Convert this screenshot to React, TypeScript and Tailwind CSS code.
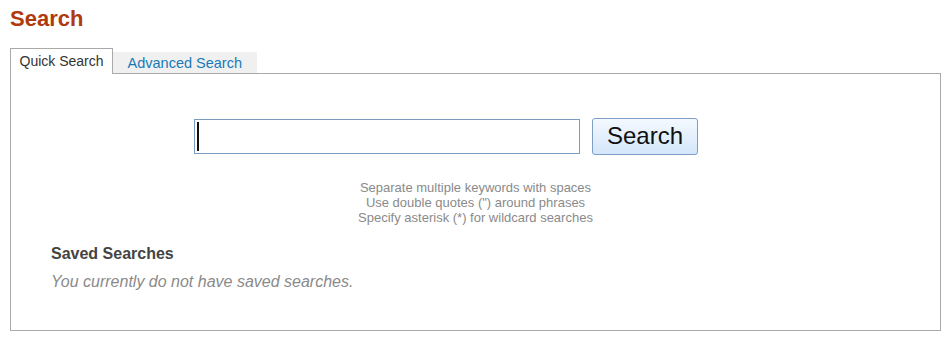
import React, { useState } from 'react';

const font = { fontFamily: '"Liberation Sans", Arial, sans-serif' };

export default function App() {
  const [tab, setTab] = useState<'quick' | 'advanced'>('quick');
  const [query, setQuery] = useState('');

  return (
    <div className="bg-white min-h-[338px] pl-[10px] pr-[6px] pt-[6px]" style={font}>
      <h1 className="text-[22px] leading-[25px] font-bold text-[#b03a0e]">Search</h1>

      <div className="mt-[17px] flex items-end h-[25px]">
        <button
          onClick={() => setTab('quick')}
          className={
            tab === 'quick'
              ? 'relative z-10 h-[26px] -mb-px px-[8.5px] pb-[1px] border border-b-0 border-[#aaaaaa] bg-white text-[14px] text-[#333]'
              : 'h-[21px] px-[15px] bg-[#f0f0f0] text-[14px] text-[#1a7ab8]'
          }
        >
          Quick Search
        </button>
        <button
          onClick={() => setTab('advanced')}
          className={
            tab === 'advanced'
              ? 'relative z-10 h-[26px] -mb-px px-[8.5px] pb-[1px] border border-b-0 border-[#aaaaaa] bg-white text-[14px] text-[#333]'
              : 'h-[21px] px-[14.5px] pt-[1px] bg-[#f0f0f0] text-[14.5px] text-[#1a7ab8]'
          }
        >
          Advanced Search
        </button>
      </div>

      <div className="border border-[#aaaaaa] h-[258px]">
        <div className="pl-[183px] pt-[44px] flex items-center gap-[12px]">
          <div className="relative">
            <input
              value={query}
              onChange={(e) => setQuery(e.target.value)}
              className="w-[386px] h-[35px] border border-[#7a9cc0] px-[3px] text-[18px] outline-none caret-transparent"
              style={font}
            />
            {query === '' && (
              <span className="absolute left-[3px] top-[3px] w-[2px] h-[29px] bg-[#111]" />
            )}
          </div>
          <button className="w-[106px] h-[37px] pb-[2px] rounded-[3px] border border-[#7d9fc7] bg-gradient-to-b from-[#f4f9ff] to-[#d4e6fa] text-[24px] leading-none text-[#111]">
            Search
          </button>
        </div>

        <div className="mt-[25px] text-center text-[13px] leading-[15px] text-[#8a8a8a]">
          <div>Separate multiple keywords with spaces</div>
          <div>Use double quotes (&quot;) around phrases</div>
          <div>Specify asterisk (*) for wildcard searches</div>
        </div>

        <div className="pl-[40px] mt-[19px]">
          <h2 className="text-[16px] leading-[20px] font-bold text-[#444]">Saved Searches</h2>
          <p className="mt-[8px] text-[16px] leading-[20px] italic text-[#8a8a8a]">
            You currently do not have saved searches.
          </p>
        </div>
      </div>
    </div>
  );
}
